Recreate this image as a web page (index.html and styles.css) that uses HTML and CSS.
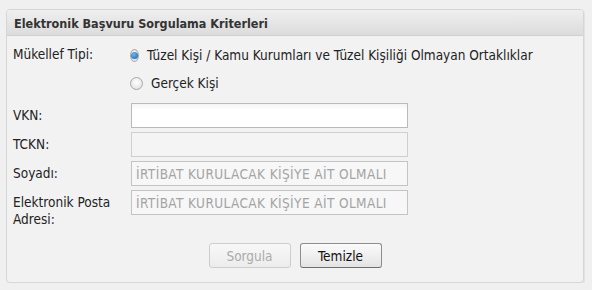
FILE: index.html
```html
<!DOCTYPE html>
<html lang="tr">
<head>
    <meta charset="UTF-8">
    <title>Elektronik Başvuru Sorgulama</title>
    <link rel="stylesheet" href="styles.css">
</head>
<body>
    <div class="panel">
        <div class="panel-header">Elektronik Başvuru Sorgulama Kriterleri</div>
        <div class="panel-body">
            <div class="form-grid">
                <div class="label label-radio">Mükellef Tipi:</div>
                <div class="radio-group">
                    <label class="radio-option">
                        <input type="radio" name="tip" checked>
                        <span class="radio-mark"></span>
                        <span>Tüzel Kişi / Kamu Kurumları ve Tüzel Kişiliği Olmayan Ortaklıklar</span>
                    </label>
                    <label class="radio-option">
                        <input type="radio" name="tip">
                        <span class="radio-mark"></span>
                        <span>Gerçek Kişi</span>
                    </label>
                </div>

                <label class="label" for="vkn">VKN:</label>
                <input class="field" type="text" id="vkn">

                <label class="label" for="tckn">TCKN:</label>
                <input class="field" type="text" id="tckn" disabled>

                <label class="label" for="soyadi">Soyadı:</label>
                <input class="field field-soft" type="text" id="soyadi" placeholder="İRTİBAT KURULACAK KİŞİYE AİT OLMALI">

                <label class="label" for="eposta">Elektronik Posta Adresi:</label>
                <input class="field field-soft" type="text" id="eposta" placeholder="İRTİBAT KURULACAK KİŞİYE AİT OLMALI">
            </div>

            <div class="buttons">
                <button class="btn" disabled>Sorgula</button>
                <button class="btn">Temizle</button>
            </div>
        </div>
    </div>
</body>
</html>
```

FILE: styles.css
```css
* {
    box-sizing: border-box;
}

body {
    margin: 0;
    padding: 9px 9px 0 6px;
    background-color: #f0f0f0;
    font-family: "DejaVu Sans Condensed", "DejaVu Sans", sans-serif;
    font-size: 13.5px;
    color: #222;
}

.panel {
    width: 578px;
    height: 274px;
    border: 1px solid #d6d6d6;
    border-radius: 4px;
    background-color: #f2f2f2;
    box-shadow: 1px 1px 1px rgba(0, 0, 0, 0.06);
}

.panel-header {
    height: 26px;
    padding: 6px 7px 0;
    font-size: 12.5px;
    font-weight: bold;
    color: #333;
    background: linear-gradient(#efefef, #dcdcdc);
    border-bottom: 1px solid #d0d0d0;
    border-radius: 3px 3px 0 0;
}

.panel-body {
    padding: 7px 0 0 6px;
}

.form-grid {
    display: grid;
    grid-template-columns: 118px 277px;
    row-gap: 4px;
}

.label {
    padding-top: 4px;
    line-height: 17px;
}

.label-radio {
    padding-top: 3px;
}

/* Grupo de opções do tipo de contribuinte */
.radio-group {
    display: flex;
    flex-direction: column;
    gap: 4px;
    margin-bottom: 4px;
    white-space: nowrap;
}

.radio-option {
    display: flex;
    align-items: center;
    gap: 8px;
    height: 24px;
}

.radio-option input {
    display: none;
}

.radio-mark {
    width: 13px;
    height: 13px;
    margin-left: -1px;
    border-radius: 50%;
    border: 1px solid #a8a8a8;
    background: radial-gradient(circle at 50% 40%, #ffffff, #dcdcdc);
    display: flex;
    align-items: center;
    justify-content: center;
}

.radio-option input:checked + .radio-mark::after {
    content: "";
    width: 7px;
    height: 7px;
    border-radius: 50%;
    background: radial-gradient(circle at 40% 35%, #6fb6ee, #1a5f9c);
}

.field {
    height: 25px;
    padding: 0 4px;
    border: 1px solid #b9b9c2;
    background: linear-gradient(#f4f4f4, #ffffff 6px);
    font-family: inherit;
    font-size: 13.5px;
    letter-spacing: 0.4px;
    color: #222;
}

.field:disabled {
    border-color: #cfcfcf;
    background: #f4f4f4;
}

.field::placeholder {
    color: #a4a4a4;
}

.field-soft {
    border-color: #c4c4c4;
    background: #f7f7f7;
}

.buttons {
    display: flex;
    justify-content: center;
    gap: 9px;
    margin-top: 15px;
    padding-right: 6px;
}

.btn {
    width: 82px;
    height: 25px;
    border: 1px solid #8e8e8e;
    border-bottom-color: #6e6e6e;
    border-radius: 3px;
    background: linear-gradient(#fbfbfb, #e4e4e4);
    font-family: inherit;
    font-size: 13.5px;
    color: #111;
}

.btn:disabled {
    border-color: #cdcdcd;
    background: linear-gradient(#f8f8f8, #ececec);
    color: #ababab;
}
```
